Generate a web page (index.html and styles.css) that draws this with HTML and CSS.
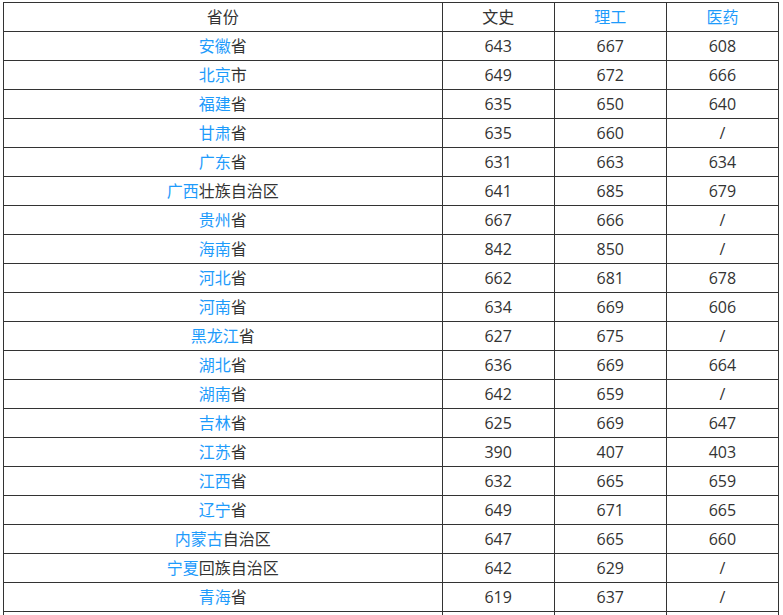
FILE: index.html
```html
<!DOCTYPE html>
<html lang="zh-CN">
<head>
<meta charset="utf-8">
<title>分数线</title>
<link rel="stylesheet" href="styles.css">
</head>
<body>
<table class="score-table">
  <colgroup>
    <col class="c-prov">
    <col class="c-num">
    <col class="c-num">
    <col class="c-num">
  </colgroup>
  <tr><td>省份</td><td>文史</td><td><a class="lk">理工</a></td><td><a class="lk">医药</a></td></tr>
  <tr><td><a class="lk">安徽</a>省</td><td>643</td><td>667</td><td>608</td></tr>
  <tr><td><a class="lk">北京</a>市</td><td>649</td><td>672</td><td>666</td></tr>
  <tr><td><a class="lk">福建</a>省</td><td>635</td><td>650</td><td>640</td></tr>
  <tr><td><a class="lk">甘肃</a>省</td><td>635</td><td>660</td><td>/</td></tr>
  <tr><td><a class="lk">广东</a>省</td><td>631</td><td>663</td><td>634</td></tr>
  <tr><td><a class="lk">广西</a>壮族自治区</td><td>641</td><td>685</td><td>679</td></tr>
  <tr><td><a class="lk">贵州</a>省</td><td>667</td><td>666</td><td>/</td></tr>
  <tr><td><a class="lk">海南</a>省</td><td>842</td><td>850</td><td>/</td></tr>
  <tr><td><a class="lk">河北</a>省</td><td>662</td><td>681</td><td>678</td></tr>
  <tr><td><a class="lk">河南</a>省</td><td>634</td><td>669</td><td>606</td></tr>
  <tr><td><a class="lk">黑龙江</a>省</td><td>627</td><td>675</td><td>/</td></tr>
  <tr><td><a class="lk">湖北</a>省</td><td>636</td><td>669</td><td>664</td></tr>
  <tr><td><a class="lk">湖南</a>省</td><td>642</td><td>659</td><td>/</td></tr>
  <tr><td><a class="lk">吉林</a>省</td><td>625</td><td>669</td><td>647</td></tr>
  <tr><td><a class="lk">江苏</a>省</td><td>390</td><td>407</td><td>403</td></tr>
  <tr><td><a class="lk">江西</a>省</td><td>632</td><td>665</td><td>659</td></tr>
  <tr><td><a class="lk">辽宁</a>省</td><td>649</td><td>671</td><td>665</td></tr>
  <tr><td><a class="lk">内蒙古</a>自治区</td><td>647</td><td>665</td><td>660</td></tr>
  <tr><td><a class="lk">宁夏</a>回族自治区</td><td>642</td><td>629</td><td>/</td></tr>
  <tr><td><a class="lk">青海</a>省</td><td>619</td><td>637</td><td>/</td></tr>
  <tr><td></td><td></td><td></td><td></td></tr>
</table>
</body>
</html>
```
FILE: styles.css
```css
html, body {
  margin: 0;
  padding: 0;
  background: #ffffff;
}
body {
  padding: 2px 0 0 3px;
  font-family: "Open Sans", "Noto Sans CJK SC", sans-serif;
  font-size: 16px;
  color: #333333;
}
.score-table {
  border-collapse: collapse;
  width: 776px;
  table-layout: fixed;
}
.c-prov { width: 438px; }
.c-num { width: 112px; }
.score-table td {
  border: 1px solid #333333;
  height: 28px;
  padding: 0;
  line-height: 28px;
  text-align: center;
  vertical-align: middle;
  white-space: nowrap;
}
.lk {
  color: #1e9bfb;
  text-decoration: none;
}
```
